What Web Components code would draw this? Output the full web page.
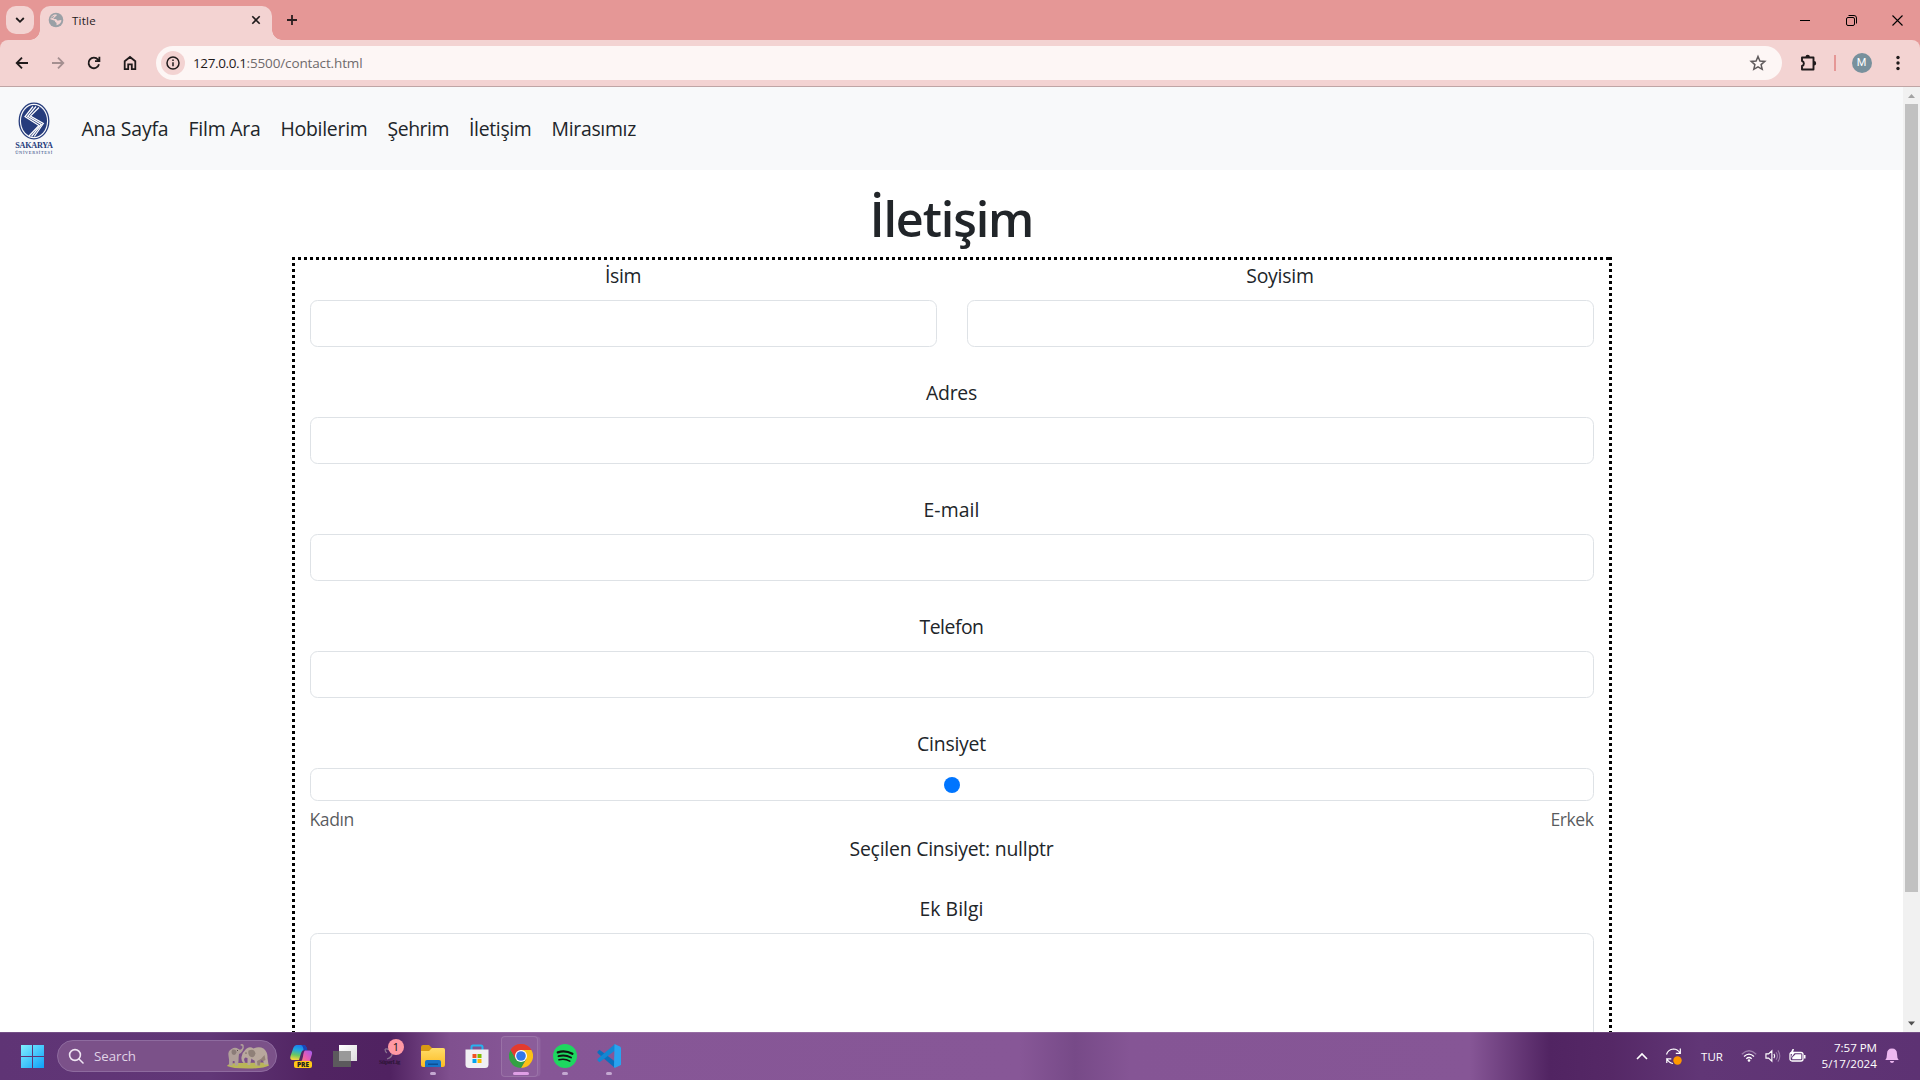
<!DOCTYPE html>
<html lang="tr">
<head>
<meta charset="utf-8">
<title>Title</title>
<style>
html,body{margin:0;height:100%;overflow:hidden;background:#fff}
body{display:flex;flex-direction:column;width:1920px;height:1080px;font-family:"Open Sans","Noto Sans",sans-serif;color:#212529}
</style>
</head>
<body>
<tab-strip></tab-strip>
<browser-toolbar></browser-toolbar>
<page-view></page-view>
<task-bar></task-bar>
<script>
const define=(name,html,extra)=>customElements.define(name,class extends HTMLElement{
  constructor(){super();this.attachShadow({mode:'open'}).innerHTML=html;}
  connectedCallback(){if(extra)extra.call(this);}
});

/* Text set to a given advance width by letter spacing */
define('fit-text',`<style>:host{display:inline-block;white-space:nowrap}span{display:inline-block}</style><span><slot></slot></span>`,function(){
  const s=this.shadowRoot.querySelector('span'),w=+this.getAttribute('w'),n=this.textContent.length;
  const nat=s.getBoundingClientRect().width;
  if(w&&nat){const d=(w-nat)/n;s.style.letterSpacing=d+'px';}
});

/* Fixed-size centring cell */
define('icon-cell',`<style>:host{display:flex;align-items:center;justify-content:center;flex:none}</style><slot></slot>`,function(){
  this.style.width=this.getAttribute('w')+'px';
});

define('tab-strip',`<style>
:host{display:flex;flex:none;height:40px;background:#e59796;align-items:flex-start;color:#1f1a1b}
.search{width:28px;height:28px;margin:6px 6px 0 6px;border-radius:10px;background:#f3d3d2;display:flex;align-items:center;justify-content:center}
.tab{display:flex;align-items:center;box-sizing:border-box;width:232px;height:34px;margin-top:6px;padding:0 8px 6px;border-radius:10px 10px 0 0;background:#f3d3d2;position:relative;font-size:11.5px}
.tab::before,.tab::after{content:"";position:absolute;bottom:0;width:10px;height:10px}
.tab::before{left:-10px;background:radial-gradient(circle at 0 0,transparent 9.5px,#f3d3d2 10px)}
.tab::after{right:-10px;background:radial-gradient(circle at 100% 0,transparent 9.5px,#f3d3d2 10px)}
.tab fit-text{margin-left:8px;flex:1}
svg{display:block;flex:none}
</style>
<div class="search"><svg width="12" height="12" viewBox="0 0 12 12" fill="none" stroke="#1f1a1b" stroke-width="1.8"><path d="M2.2 4 6 7.8 9.8 4"/></svg></div>
<div class="tab">
<svg width="16" height="16" viewBox="0 0 16 16"><circle cx="8" cy="8" r="7.3" fill="#9aa0a6"/><path d="M8.600 2.600c.5 1-.2 1.500-1.200 1.900-.3 1-1.200 1.200-1.800 1.700-.3.700.6.900 1.500.9 1.100 0 1.900.6 2 1.400 1.300.1 2.400.3 2.700-.5l1.700.2c-.2 2.600-2.200 4.400-4.800 5.100-.5-.8.300-1.600-.4-2.500-.9-.5-1.500-1.100-1.400-2L2.400 7.300c.3-2.800 3-5 6.200-4.700Z" fill="#f3d3d2"/><path d="M3.300 5.200 6.600 3.400 5.200 5.500 3.600 6.600zM9.500 2.500c2 .6 3.500 2 4 4-1.600.8-3 .4-3.400-.6-.3-.9-1.400-2-.6-3.400z" fill="#9aa0a6"/></svg>
<fit-text w="24">Title</fit-text>
<svg width="16" height="16" viewBox="0 0 16 16" fill="none" stroke="#1f1a1b" stroke-width="1.6"><path d="M4.300 4.300l7.400 7.400M11.700 4.300l-7.400 7.400"/></svg>
</div>
<icon-cell w="40" style="height:40px"><svg width="12" height="12" viewBox="0 0 12 12" stroke="#2b1f20" stroke-width="1.8"><path d="M6 1v10M1 6h10"/></svg></icon-cell>
<div style="flex:1"></div>
<icon-cell w="46" style="height:40px"><svg width="10" height="10" stroke="#000"><path d="M0 5.500h10"/></svg></icon-cell>
<icon-cell w="46" style="height:40px"><svg width="11" height="11" fill="none" stroke="#000"><rect x=".5" y="2.500" width="8" height="8" rx="1.500"/><path d="M2.500.5h5.500a2.500 2.500 0 0 1 2.500 2.500V8.500"/></svg></icon-cell>
<icon-cell w="46" style="height:40px"><svg width="11" height="11" stroke="#000" stroke-width="1.100"><path d="M.5.5l10 10M10.500.5l-10 10"/></svg></icon-cell>
`);

define('browser-toolbar',`<style>
:host{display:flex;flex:none;height:47px;background:#e59796}
.bar{flex:1;display:flex;align-items:center;box-sizing:border-box;padding:0 4px;border-bottom:1px solid #bfa5a5;background:#f3d3d2;border-radius:8px 8px 0 0}
svg{display:block;flex:none}
.omni{flex:1;display:flex;align-items:center;height:34px;margin:0 8px;border-radius:17px;background:#fdf6f5;box-sizing:border-box;padding:0 14px 0 5px;font-size:13.500px;color:#6f6a6c}
.info{width:24px;height:24px;border-radius:50%;background:#f3d3d2;display:flex;align-items:center;justify-content:center;margin-right:8px}
.host{color:#1f1a1b}
.sp{flex:1}
.av{width:20px;height:20px;border-radius:50%;background:#78909c;color:#fff;font:11px/20px Roboto,sans-serif;text-align:center}
.div{width:2px;height:16px;background:#e59796}
</style>
<div class="bar">
<icon-cell w="36"><svg width="16" height="16" viewBox="0 0 16 16" fill="none" stroke="#1f1a1b" stroke-width="1.800"><path d="M14 8H3M8 2.700 2.700 8 8 13.300"/></svg></icon-cell>
<icon-cell w="36"><svg width="16" height="16" viewBox="0 0 16 16" fill="none" stroke="#a48f90" stroke-width="1.800"><path d="M2 8h11M8 2.700 13.300 8 8 13.300"/></svg></icon-cell>
<icon-cell w="36"><svg width="16" height="16" viewBox="0 0 16 16" fill="none" stroke="#1f1a1b" stroke-width="1.800"><path d="M13 9.300A5.300 5.300 0 1 1 12 4.600L13.200 6M13.400 1.800V6.200H9"/></svg></icon-cell>
<icon-cell w="36"><svg width="16" height="16" viewBox="0 0 16 16" fill="none" stroke="#1f1a1b" stroke-width="1.800"><path d="M2.700 6.300 8 2l5.300 4.300v7.900H9.800V9.300H6.200v4.900H2.700z"/></svg></icon-cell>
<div class="omni">
<div class="info"><svg width="14" height="14" viewBox="0 0 14 14" fill="none" stroke="#1f1a1b" stroke-width="1.500"><circle cx="7" cy="7" r="6"/><path d="M7 6.300v4M7 3.600v1.500"/></svg></div>
<fit-text class="host" w="53.500">127.0.0.1</fit-text><fit-text w="116">:5500/contact.html</fit-text>
<span class="sp"></span>
<svg width="20" height="20" viewBox="0 0 20 20" fill="none" stroke="#5f5a5c" stroke-width="1.500"><path d="M10 3.500l1.900 4.500 4.900.4-3.700 3.200 1.100 4.700-4.200-2.500-4.200 2.500 1.100-4.700-3.700-3.200 4.900-.4z"/></svg>
</div>
<icon-cell w="36"><svg width="18" height="18" viewBox="0 0 18 18"><path d="M3 3.500H14.500V15.500H3V12A2.600 2.600 0 0 0 3 7z" fill="none" stroke="#1f1a1b" stroke-width="1.900" stroke-linejoin="round"/><path d="M6.500 3a2.200 2.200 0 0 1 4.400 0zM15 7a2.200 2.200 0 0 1 0 4.400z" fill="#1f1a1b"/></svg></icon-cell>
<icon-cell w="17"><div class="div"></div></icon-cell>
<icon-cell w="37"><div class="av">M</div></icon-cell>
<icon-cell w="36"><svg width="4" height="16" fill="#1f1a1b"><circle cx="2" cy="2.500" r="1.700"/><circle cx="2" cy="8" r="1.700"/><circle cx="2" cy="13.500" r="1.700"/></svg></icon-cell>
</div>`);

define('uni-logo',`<style>:host{display:flex;flex-direction:column;align-items:center;width:38px;color:#263c7c;font-family:"Liberation Serif",serif;font-weight:700;white-space:nowrap}
svg{display:block}.a{font-size:8.200px;line-height:8px;margin-top:2px}.b{font-size:4.500px;line-height:5px;font-weight:400}</style>
<svg width="32" height="38" viewBox="0 0 32 38"><ellipse cx="16" cy="19" rx="14.800" ry="17.800" fill="#f8f9fa" stroke="#263c7c" stroke-width="1.300"/><ellipse cx="16" cy="19" rx="13" ry="16" fill="#263c7c"/><g fill="none" stroke="#fff" stroke-width="1.250"><path d="M15 4.500 7 14.500 21 23.500 11 34"/><path d="M18 4.500 9.700 14.300 23.300 22.500 13.500 34.500"/><path d="M21 5.500 12.400 14.100 25.300 21.500 16.300 34.500"/></g></svg>
<fit-text class="a" w="37.500">SAKARYA</fit-text><fit-text class="b" w="37.500">ÜNİVERSİTESİ</fit-text>`);

define('nav-link',`<style>:host{display:block;padding:10px;font-size:19.400px;line-height:30px}</style><slot></slot>`);

define('site-nav',`<style>:host{display:flex;flex:none;align-items:center;height:83px;background:#f8f9fa;padding-left:14px}
uni-logo{margin-right:-1px;padding-left:1px}
nav{display:flex;margin-left:19.500px}</style>
<uni-logo></uni-logo><nav>
<nav-link><fit-text w="87">Ana Sayfa</fit-text></nav-link><nav-link><fit-text w="72">Film Ara</fit-text></nav-link><nav-link><fit-text w="87">Hobilerim</fit-text></nav-link><nav-link><fit-text w="61.500">Şehrim</fit-text></nav-link><nav-link><fit-text w="62.500">İletişim</fit-text></nav-link><nav-link><fit-text w="84.500">Mirasımız</fit-text></nav-link></nav>`);

define('form-field',`<style>:host{display:flex;flex-direction:column;align-items:center;flex:1;font-size:19.400px}
.label{box-sizing:border-box;line-height:30px;height:40px;padding-top:1px;flex:none}
.box{flex:none;box-sizing:border-box;width:100%;height:var(--h,47px);border:1px solid #dee2e6;border-radius:7.500px;display:flex;align-items:center;justify-content:center}
</style><div class="label"><slot></slot></div><div class="box"><slot name="inside"></slot></div>`);

define('contact-form',`<style>
:host{display:block;box-sizing:border-box;width:1320px;height:900px;margin:0 auto;padding:3px 18px 0;
background:repeating-linear-gradient(90deg,#000 0 3px,transparent 3px 6px) 0 0/100% 3px no-repeat,repeating-linear-gradient(#000 0 3px,transparent 3px 6px) 0 0/3px 100% no-repeat,repeating-linear-gradient(#000 0 3px,transparent 3px 6px) 100% 0/3px 100% no-repeat}
.row{display:flex;gap:30px;height:117px}
.range{height:73px}
.dot{width:16px;height:16px;border-radius:50%;background:#0075ff}
.ends{display:flex;justify-content:space-between;font-size:17.600px;line-height:26px;height:28px;padding-top:5px;color:#212529bf}
.pick{text-align:center;font-size:19.400px;line-height:30px;height:59px}
</style>
<div class="row"><form-field><fit-text w="36">İsim</fit-text></form-field><form-field><fit-text w="67.500">Soyisim</fit-text></form-field></div>
<div class="row"><form-field><fit-text w="51">Adres</fit-text></form-field></div>
<div class="row"><form-field><fit-text w="56">E-mail</fit-text></form-field></div>
<div class="row"><form-field><fit-text w="64">Telefon</fit-text></form-field></div>
<div class="row range"><form-field style="--h:33px"><fit-text w="69">Cinsiyet</fit-text><div class="dot" slot="inside"></div></form-field></div>
<div class="ends"><fit-text w="44.500">Kadın</fit-text><fit-text w="43">Erkek</fit-text></div>
<div class="pick"><fit-text w="204">Seçilen Cinsiyet: nullptr</fit-text></div>
<div class="row"><form-field style="--h:180px"><fit-text w="64">Ek Bilgi</fit-text></form-field></div>`);

define('scroll-bar',`<style>:host{display:flex;flex-direction:column;flex:none;width:17px;background:#f1f1f1;align-items:center}
.thumb{width:13px;height:788px;background:#c1c1c1}svg{display:block}.sp{flex:1}</style>
<svg width="17" height="17"><path d="M5 11h7L8.500 7z" fill="#a3a3a3"/></svg><div class="thumb"></div><div class="sp"></div><svg width="17" height="17"><path d="M5 6.500h7L8.500 10.500z" fill="#505050"/></svg>`);

define('page-view',`<style>:host{display:flex;flex:1;min-height:0;overflow:hidden}
main{flex:1;display:flex;flex-direction:column;overflow:hidden}
h1{flex:none;margin:0;text-align:center;font-size:48.500px;font-weight:600;line-height:60px;padding-top:18px;height:69px}
contact-form{flex:none}</style>
<main><site-nav></site-nav><h1><fit-text w="163.500">İletişim</fit-text></h1><contact-form></contact-form></main><scroll-bar></scroll-bar>`);

define('task-button',`<style>:host{display:flex;position:relative;flex:none;width:44px;height:48px;align-items:center;justify-content:center}
:host([open])::after{content:"";position:absolute;left:19px;top:40px;width:6px;height:3px;border-radius:2px;background:#c4a8d1}
:host([active])::after{left:14px;width:16px;background:#df9fe6}
:host([active])::before{content:"";position:absolute;left:2px;top:4px;width:35px;height:39px;border:1px solid #ffffff22;border-radius:4px;background:#ffffff0c;box-shadow:3px 0 0 -0.500px #ffffff14}
::slotted(svg){display:block;position:relative}</style><slot></slot>`);

define('search-pill',`<style>:host{display:flex;align-items:center;flex:none;box-sizing:border-box;width:220px;height:32px;border-radius:16px;border:1px solid #8e6b9f;background:#7b5189;padding:0 6px 0 10px;font-size:13.300px;color:#e0d3e6}
svg{display:block}fit-text{margin-left:10px;flex:1}</style>
<svg width="16" height="16" viewBox="0 0 16 16" fill="none" stroke="#eee4f2" stroke-width="1.600" stroke-linecap="round"><circle cx="7" cy="7" r="5.400"/><path d="M11 11l4 4"/></svg><fit-text w="42">Search</fit-text>
<svg width="44" height="26" viewBox="0 0 44 26"><path d="M1 23Q2 20 12 20L36 19.500Q43 20 43 22.500 38 25.500 22 25.500T1 23Z" fill="#b9b658"/><path d="M3 22.500Q3.500 17 2.500 13 1.500 8 5.500 6 9 3.500 12.500 6 14.500 7.500 16 5.500 17 4 16 2.800 14.500 3 14.300 1.800 16 .2 17.600 2 18.600 5 16.500 8 15 10.500 13 11 12.500 14 12.500 18L12 22.500H9L8.500 18H6.800L6.500 22.500Z" fill="#b0a099"/><path d="M6.500 6.500Q10.500 6 10.500 9.500 9.500 13 6.500 11.500Q4.500 9 6.500 6.500Z" fill="#8b7c78"/><path d="M17.500 20Q15 18.500 15.500 14 16.500 9 20 6 23.500 3 27.500 5.500 33 3 37.500 5.500 42 9 41.500 15L42.500 21.500H38L37 17 34.500 16.500 34 22.500H29.500L28.500 17.500Q26.500 17 25.500 15.500L24 22H21.500L21.500 15Q18.500 13.500 18.200 16 17.800 18 19.500 19.500Z" fill="#b8a89d"/><path d="M22.500 7.500Q28.500 5 29.500 10.500 28 16 24 13.500Q21.500 11 22.500 7.500Z" fill="#8f8078"/><path d="M31 18Q36 16 38.500 12L39.500 17 37.500 18 34.500 17 34 22.500H31.500Z" fill="#948277"/><circle cx="20" cy="10" r=".6" fill="#3d302e"/><circle cx="11.500" cy="7.500" r=".5" fill="#3d302e"/></svg>`);

define('task-bar',`<style>
:host{display:flex;flex:none;box-sizing:border-box;height:48px;align-items:center;padding-left:11px;color:#fff;box-shadow:inset 0 1px 0 #ffffff22;
background:linear-gradient(90deg,#5f3475 0,#613777 210px,#512462 310px,#502261 390px,#80508f 450px,#865696 520px,#875797 1020px,#774a88 1075px,#855595 1130px,#865696 1470px,#512462 1550px,#552866 1610px,#613676 1700px,#5d3273 1920px)}
svg{display:block}.sp{flex:1}.badge{position:absolute;left:21px;top:7px;width:16px;height:16px;border-radius:50%;background:#ff99a4;color:#111;font-size:11px;line-height:16px;text-align:center}
.pre{position:absolute;left:15px;top:29px;width:18px;height:7px;border-radius:2px;background:#ffc817;color:#222;font-size:6.500px;line-height:7px;font-weight:800;text-align:center}
.lig{position:absolute;left:12px;top:26px;font:700 6px/8px "Liberation Serif",serif;color:#2c1436}
.clock{display:flex;flex-direction:column;align-items:flex-end;width:64px;font-size:11.600px;line-height:16px}
</style>
<task-button><svg width="24" height="24" viewBox="0 0 24 24"><defs><linearGradient id="w" x1="0" y1="0" x2="1" y2="1"><stop offset="0" stop-color="#80f0ff"/><stop offset="1" stop-color="#0ea0f8"/></linearGradient></defs><path d="M0 1h11v11H0zM12 1h11v11H12zM0 13h11v11H0zM12 13h11v11H12z" fill="url(#w)"/></svg></task-button>
<search-pill style="margin:0 2px"></search-pill>
<task-button><svg width="24" height="24" viewBox="0 0 24 24"><defs><linearGradient id="c1" x1=".6" y1="0" x2=".4" y2="1"><stop offset="0" stop-color="#1a7cf0"/><stop offset=".35" stop-color="#22a8e0"/><stop offset=".7" stop-color="#6cc860"/><stop offset="1" stop-color="#f4d43c"/></linearGradient><linearGradient id="c2" x1="1" y1="0" x2="0" y2="1"><stop offset="0" stop-color="#9c5cf0"/><stop offset=".5" stop-color="#e85cb4"/><stop offset="1" stop-color="#ff8a5c"/></linearGradient></defs><path d="M7.500 1h7q2.500 0 3.500 5h-3q-2 0-3 3.500L10 16H3.500Q.5 16 1.500 12L4.500 3.500Q5.500 1 7.500 1z" fill="url(#c1)"/><path d="M12 1h3q2.500 0 3.500 5.500h-4Q14.500 2 12 1z" fill="#1b45b8"/><path d="M16 6.500h4.500q3 0 2.500 3.500l-2 6.500q-1 2.500-3 2.500h-7q2.500-2 3-6.500 .5-5 2-6z" fill="url(#c2)"/></svg><span class="pre">PRE</span></task-button>
<task-button><svg width="24" height="24" viewBox="0 0 24 24"><defs><linearGradient id="t" x1="0" y1="0" x2="1" y2="1"><stop offset="0" stop-color="#fff"/><stop offset="1" stop-color="#ddd"/></linearGradient></defs><path d="M6 1h18v16H6z" fill="url(#t)"/><path d="M0 7h18v16H0z" fill="#5c5a5d"/><path d="M6 7h12v10H6z" fill="#999"/></svg></task-button>
<task-button><svg width="24" height="24" viewBox="0 0 24 24" fill="none" stroke="#89738f" stroke-width="1.200"><path d="M8 5q4-1 7 3M15 8q1 5-5 7M8 5q0 3 2 4"/></svg><span class="lig"><fit-text w="21">SüperLig</fit-text></span><span class="badge">1</span></task-button>
<task-button open><svg width="24" height="24" viewBox="0 0 24 24"><defs><linearGradient id="f" x1="0" y1="0" x2="0" y2="1"><stop offset="0" stop-color="#ffdc69"/><stop offset="1" stop-color="#fcbb22"/></linearGradient></defs><path d="M0 3q0-2 2-2h6l3 3H22q2 0 2 2v6H0z" fill="#d99a13"/><path d="M0 7h8l3-3h11q2 0 2 2v15q0 2-2 2H2q-2 0-2-2z" fill="url(#f)"/><path d="M4 23v-5q0-2 2-2h12q2 0 2 2v5z" fill="#1673c8"/><path d="M7 19.500h10v1.500H7z" fill="#0d4f92"/></svg></task-button>
<task-button><svg width="24" height="24" viewBox="0 0 24 24"><path d="M6.500 6V3q0-1.500 1.500-1.500h8Q17.500 1.500 17.500 3v3" fill="none" stroke="#27b3ef" stroke-width="2"/><path d="M.5 5.500h23v15q0 3.500-3.500 3.500H4Q.5 24 .5 20.500z" fill="#f1eff3"/><path d="M7.500 10H11.500v4H7.500z" fill="#f25022"/><path d="M12.500 10h4v4h-4z" fill="#7fba00"/><path d="M7.500 15h4v4h-4z" fill="#00a4ef"/><path d="M12.500 15h4v4h-4z" fill="#ffb900"/></svg></task-button>
<task-button open active><svg width="24" height="24" viewBox="0 0 24 24"><path d="M12 12 1.600 6A12 12 0 0 1 22.400 6z" fill="#ea4335"/><path d="M12 12V6h10.400A12 12 0 0 1 12 24l5.200-9z" fill="#fbc116"/><path d="M12 12 17.200 15 12 24A12 12 0 0 1 1.600 6L6.800 15z" fill="#34a044"/><path d="M1.600 6A12 12 0 0 1 22.400 6H12L6.800 15z" fill="#e33b2e"/><circle cx="12" cy="12" r="6" fill="#fff"/><circle cx="12" cy="12" r="4.800" fill="#3277ea"/></svg></task-button>
<task-button open><svg width="24" height="24" viewBox="0 0 24 24"><circle cx="12" cy="12" r="12" fill="#1ed760"/><g fill="none" stroke="#10140f" stroke-linecap="round"><path d="M4.800 8.300Q12.500 6 19.400 9.800" stroke-width="2.300"/><path d="M5.500 12.200Q12 10.300 18 13.500" stroke-width="1.900"/><path d="M6 15.800Q12 14.400 16.800 17.100" stroke-width="1.600"/></g></svg></task-button>
<task-button open><svg width="24" height="24" viewBox="0 0 24 24"><path d="M.5 7.500 2.500 5.800 18 17.500V24L.5 9z" fill="#0a70bd"/><path d="M.5 16.500 2.500 18.200 18 6.500V0L.5 15z" fill="#1387d3"/><path d="M17.500 0 23 2.500 24 3.500V20.500L23 21.500 17.500 24 17 23z" fill="#29a3ef"/></svg></task-button>
<span class="sp"></span>
<icon-cell w="24"><svg width="12" height="8" fill="none" stroke="#fff" stroke-width="1.600"><path d="M1 7l5-5 5 5"/></svg></icon-cell>
<icon-cell w="40"><svg width="18" height="18" viewBox="0 0 18 18" fill="none" stroke="#fff" stroke-width="1.200"><path d="M1.500 7.500Q3 2.500 8.500 2q4 0 6.500 4M15.300 1.500V6.300H10.800M8 16.500Q4 16 1.800 11.800H6.300M1.800 16v-4.200"/><circle cx="12.500" cy="13.500" r="4.200" fill="#ff9800" stroke="none"/></svg></icon-cell>
<icon-cell w="36" style="font-size:11.500px"><fit-text w="22">TUR</fit-text></icon-cell>
<icon-cell w="38"><svg width="16" height="14" viewBox="0 0 16 14" fill="none" stroke="#fff" stroke-width="1.300"><path d="M.8 5.200Q8-1.800 15.200 5.200" stroke="#9b7caa"/><path d="M3 7.500Q8 2.700 13 7.500M5.300 9.800Q8 7.300 10.700 9.800"/><circle cx="8" cy="11.500" r="1.300" fill="#fff" stroke="none"/></svg></icon-cell>
<icon-cell w="16" style="margin-left:-3px"><svg width="17" height="14" viewBox="0 0 17 14" fill="none" stroke="#fff" stroke-width="1.200"><path d="M1 4.700h2.800L7.300 1.500v11L3.800 9.300H1zM9.500 4.800q1.500 2.200 0 4.400"/><path d="M11.700 3q3 4 0 8M13.700 1q4 6 0 12" stroke="#9b7caa"/></svg></icon-cell>
<icon-cell w="32"><svg width="17" height="14" viewBox="0 0 17 14"><rect x="1" y="3.500" width="13" height="8.500" rx="2" fill="none" stroke="#fff" stroke-width="1.300"/><path d="M6.500 5.300H12.300v5H3.200V8.500z" fill="#fff"/><path d="M15 6h1.500v3.500H15z" fill="#fff"/><path d="M3.500 0 1 5h2l-1 4 4-5.500H4L5 0z" fill="#fff"/></svg></icon-cell>
<div class="clock"><fit-text w="43">7:57 PM</fit-text><fit-text w="55.500">5/17/2024</fit-text></div>
<icon-cell w="30"><svg width="14" height="16" viewBox="0 0 14 16" fill="#edb8f0"><path d="M7 .5q5 0 5 5.500 0 4 1.700 6H.3Q2 10 2 6 2 .5 7 .5zM4.800 13h4.400q-.5 2-2.200 2t-2.200-2z"/></svg></icon-cell>
<span style="width:13px"></span>`);
</script>
</body>
</html>
